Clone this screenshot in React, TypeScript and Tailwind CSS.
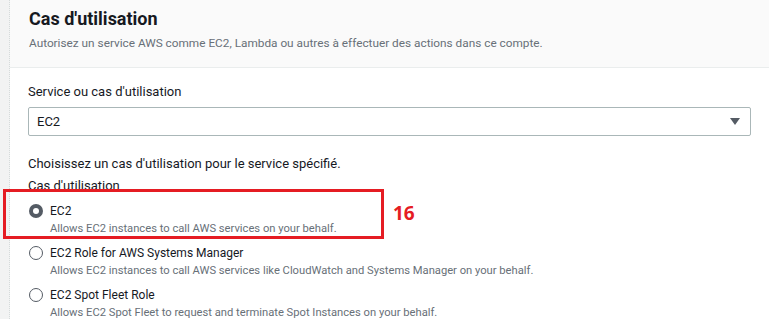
import React from 'react';

const options = [
  {
    title: 'EC2',
    desc: 'Allows EC2 instances to call AWS services on your behalf.',
    checked: true,
  },
  {
    title: 'EC2 Role for AWS Systems Manager',
    desc: 'Allows EC2 instances to call AWS services like CloudWatch and Systems Manager on your behalf.',
    checked: false,
  },
  {
    title: 'EC2 Spot Fleet Role',
    desc: 'Allows EC2 Spot Fleet to request and terminate Spot Instances on your behalf.',
    checked: false,
  },
];

function Radio({ checked }: { checked: boolean }) {
  if (checked) {
    return (
      <span className="flex h-[14px] w-[14px] items-center justify-center rounded-full bg-[#545b64]">
        <span className="h-[6px] w-[6px] rounded-full bg-white" />
      </span>
    );
  }
  return <span className="h-[14px] w-[14px] rounded-full border border-[#545b64] bg-white" />;
}

export default function App() {
  return (
    <div
      className="relative flex h-[319px] w-[769px] overflow-hidden bg-white text-[#16191f]"
      style={{ fontFamily: 'Roboto, "Noto Sans", sans-serif' }}
    >
      <div className="w-[10px] shrink-0 border-r border-dotted border-[#d5dbdb] bg-[#f2f3f3]" />
      <div className="flex-1">
        <div className="h-[68px] border-b border-[#eaeded] bg-[#fafafa] pl-[19px] pt-[7px]">
          <h2 className="text-[18px] font-bold leading-[24px] text-[#16191f]">Cas d'utilisation</h2>
          <p className="mt-[4px] text-[11.8px] leading-[16px] text-[#687078]">
            Autorisez un service AWS comme EC2, Lambda ou autres à effectuer des actions dans ce compte.
          </p>
        </div>
        <div className="pl-[18px] pr-[18px] pt-[14px]">
          <div className="text-[13px] leading-[20px]">Service ou cas d'utilisation</div>
          <div className="mt-[5px] flex h-[29px] items-center justify-between rounded-[2px] border border-[#aab7b8] bg-white pl-[8px] pr-[10px] text-[13px]">
            <span>EC2</span>
            <svg width="10" height="7" viewBox="0 0 10 7">
              <path d="M0 0 L10 0 L5 7 Z" fill="#545b64" />
            </svg>
          </div>
          <div className="mt-[18px] text-[13px] leading-[20px]">
            Choisissez un cas d'utilisation pour le service spécifié.
          </div>
          <div className="mt-[2px] text-[13px] leading-[20px]">Cas d'utilisation</div>
          <div className="mt-[5px] flex flex-col gap-[6px]">
            {options.map((o) => (
              <div key={o.title} className="flex flex-col">
                <div className="flex items-center gap-[7px] pl-[1px]">
                  <Radio checked={o.checked} />
                  <span className="text-[12px] leading-[20px]">{o.title}</span>
                </div>
                <div className="pl-[22px] text-[11.2px] leading-[16px] text-[#687078]">{o.desc}</div>
              </div>
            ))}
          </div>
        </div>
      </div>
      <div className="absolute left-[3px] top-[189px] h-[50px] w-[381px] border-[3px] border-[#e51c23]" />
      <div
        className="absolute left-[393px] top-[202px] text-[19px] font-bold leading-[22px] text-[#e51c23]"
        style={{ fontFamily: '"Open Sans", sans-serif' }}
      >
        16
      </div>
    </div>
  );
}
